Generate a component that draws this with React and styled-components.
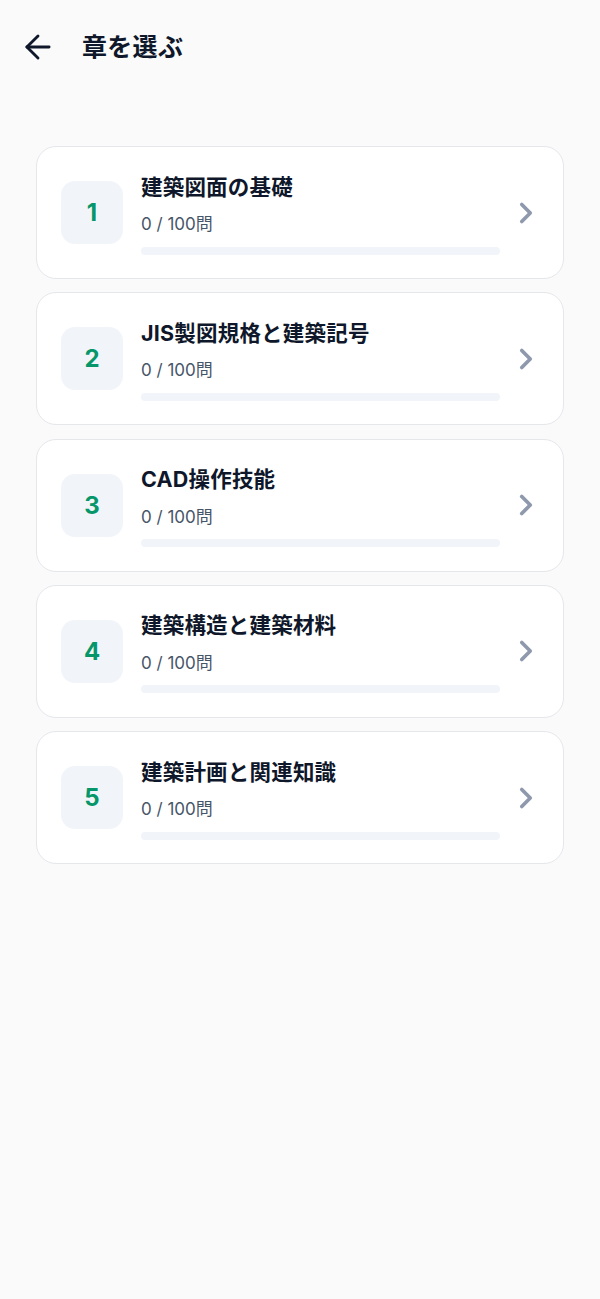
import React from "react";
import styled, { createGlobalStyle } from "styled-components";
import { ArrowLeft, ChevronRight } from "lucide-react";

const Global = createGlobalStyle`
  html, body { margin: 0; padding: 0; background: #fafafa; }
  body { font-family: Inter, "Noto Sans CJK JP", sans-serif; -webkit-font-smoothing: antialiased; }
  * { box-sizing: border-box; }
`;

const Page = styled.div`
  min-height: 1299px;
  background: #fafafa;
`;

const Header = styled.header`
  height: 94px;
  display: flex;
  align-items: center;
  padding-left: 19px;
  gap: 25px;
`;

const BackButton = styled.button`
  border: 0;
  background: none;
  padding: 0;
  width: 38px;
  height: 38px;
  display: flex;
  color: #0f172a;
  cursor: pointer;
`;

const Title = styled.h1`
  margin: 0;
  font-size: 25px;
  font-weight: 700;
  line-height: 34px;
  color: #0f172a;
  letter-spacing: 0.3px;
`;

const List = styled.div`
  display: flex;
  flex-direction: column;
  gap: 13.25px;
  padding: 52px 36px;
`;

const Card = styled.div`
  height: 133px;
  background: #ffffff;
  border: 1px solid #e5e7eb;
  border-radius: 20px;
  display: flex;
  align-items: center;
  padding: 0 20.5px 0 24px;
  cursor: pointer;
`;

const NumberBox = styled.div`
  width: 62px;
  height: 63px;
  flex: none;
  border-radius: 14px;
  background: #f1f5f9;
  display: flex;
  align-items: center;
  justify-content: center;
  font-size: 24px;
  font-weight: 700;
  color: #059669;
`;

const Body = styled.div`
  flex: 1;
  margin-left: 18px;
  margin-right: 8.5px;
  display: flex;
  flex-direction: column;
  padding-top: 1px;
`;

const ChapterTitle = styled.div`
  font-size: 21.5px;
  font-weight: 700;
  line-height: 30px;
  color: #0f172a;
  letter-spacing: 0.2px;
`;

const Count = styled.div`
  margin-top: 10.5px;
  font-size: 17px;
  line-height: 24px;
  color: #475569;
`;

const Track = styled.div`
  margin-top: 10.5px;
  height: 8px;
  border-radius: 999px;
  background: #f1f5f9;
  overflow: hidden;
`;

const Fill = styled.div`
  height: 100%;
  background: #059669;
  border-radius: 999px;
`;

const Chevron = styled.div`
  width: 34px;
  height: 34px;
  flex: none;
  display: flex;
  color: #8f99ad;
`;

const chapters = [
  { n: 1, title: "建築図面の基礎", done: 0, total: 100 },
  { n: 2, title: "JIS製図規格と建築記号", done: 0, total: 100 },
  { n: 3, title: "CAD操作技能", done: 0, total: 100 },
  { n: 4, title: "建築構造と建築材料", done: 0, total: 100 },
  { n: 5, title: "建築計画と関連知識", done: 0, total: 100 },
];

export default function App() {
  return (
    <Page>
      <Global />
      <Header>
        <BackButton aria-label="戻る">
          <ArrowLeft size={38} strokeWidth={1.8} />
        </BackButton>
        <Title>章を選ぶ</Title>
      </Header>
      <List>
        {chapters.map((c) => (
          <Card key={c.n}>
            <NumberBox>{c.n}</NumberBox>
            <Body>
              <ChapterTitle>{c.title}</ChapterTitle>
              <Count>
                {c.done} / {c.total}問
              </Count>
              <Track>
                <Fill style={{ width: `${(c.done / c.total) * 100}%` }} />
              </Track>
            </Body>
            <Chevron>
              <ChevronRight size={34} strokeWidth={2.6} />
            </Chevron>
          </Card>
        ))}
      </List>
    </Page>
  );
}
